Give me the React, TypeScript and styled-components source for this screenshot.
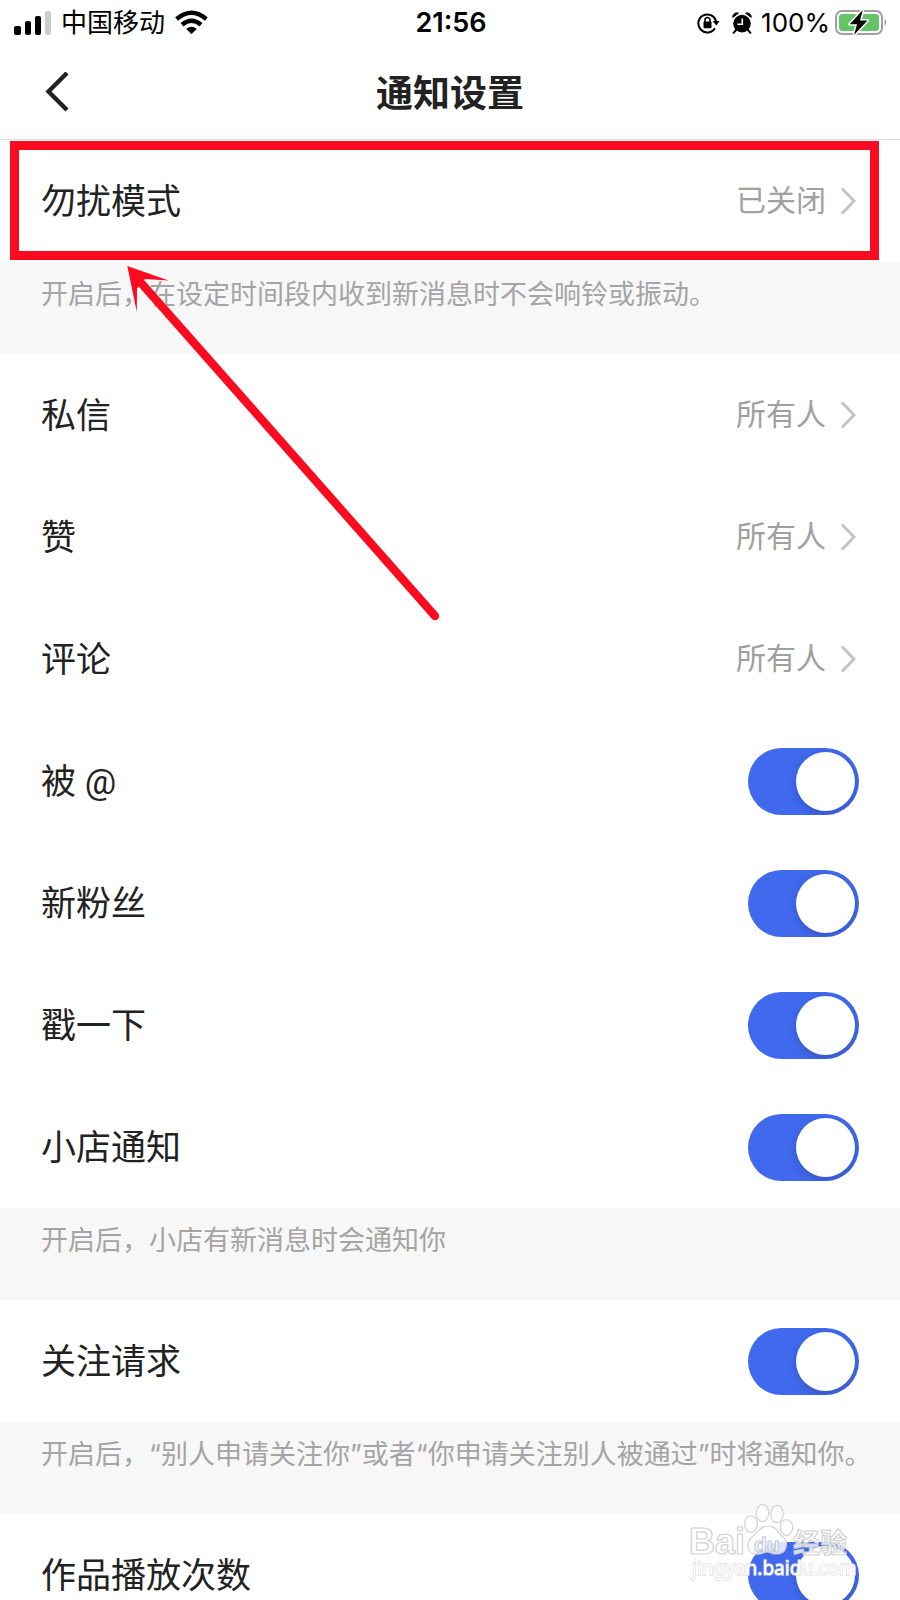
import React, { useState } from 'react';
import styled, { createGlobalStyle, css } from 'styled-components';

const GlobalStyle = createGlobalStyle`
  * { box-sizing: border-box; }
  body {
    margin: 0;
    background: #fff;
    color: #222;
    font-family: Inter, "Noto Sans CJK SC", sans-serif;
  }
`;

const Screen = styled.div`
  position: relative;
  display: flex;
  flex-direction: column;
  height: 100vh;
  overflow: hidden;
  background: #fff;
`;

const StatusBar = styled.div`
  display: grid;
  grid-template-columns: 1fr auto 1fr;
  align-items: center;
  flex: none;
  height: 45px;
  padding: 0 12px 0 14px;
  color: #000;
  font-size: 26px;
  line-height: 36px;
`;

const StatusGroup = styled.div<{ $end?: boolean }>`
  display: flex;
  align-items: center;
  justify-content: ${(p) => (p.$end ? 'flex-end' : 'flex-start')};
  gap: ${(p) => (p.$end ? 5 : 10)}px;
  svg { flex: none; }
`;

const Clock = styled.time`
  font-size: 27px;
  font-weight: 600;
`;

const StatusIcons = styled.span`
  display: flex;
  gap: 12px;
  margin-right: 4px;
`;

const NavBar = styled.header`
  display: grid;
  grid-template-columns: 1fr auto 1fr;
  align-items: center;
  flex: none;
  height: 95px;
  padding: 0 41px;
  border-bottom: 1px solid #dcdcdc;
`;

const BackButton = styled.button`
  display: flex;
  justify-self: start;
  padding: 0;
  border: 0;
  background: none;
  cursor: pointer;
`;

const Title = styled.h1`
  margin: 0;
  padding-top: 4px;
  font-size: 37px;
  line-height: 48px;
  font-weight: 600;
`;

const List = styled.main`
  flex: 1;
  min-height: 0;
  overflow-y: auto;
  scrollbar-width: none;
`;

const rowStyle = css`
  display: flex;
  align-items: center;
  justify-content: space-between;
  width: 100%;
  min-height: 122px;
  padding: 0 41px;
  background: #fff;
  color: #222;
  font-family: Roboto, "Noto Sans CJK SC", sans-serif;
  font-size: 35px;
  line-height: 48px;
  cursor: pointer;
`;

const LinkRow = styled.button`
  ${rowStyle}
  border: 0;
  text-align: left;
`;

const SwitchRow = styled.label`
  ${rowStyle}
`;

const RowLabel = styled.span`
  padding-top: 4px;
`;

const RowValue = styled.span`
  display: flex;
  align-items: center;
  gap: 14px;
  padding-right: 3px;
  color: #a0a0a0;
  font-size: 30px;
`;

const Switch = styled.input`
  appearance: none;
  display: flex;
  flex: none;
  width: 111px;
  height: 67px;
  margin: 0;
  padding: 4px;
  border-radius: 34px;
  background: #d8d8d8;
  overflow: hidden;
  cursor: pointer;

  &::before {
    content: "";
    width: 59px;
    height: 59px;
    border-radius: 50%;
    background: #fff;
    box-shadow: 0 3px 8px rgba(0, 0, 0, 0.2);
  }
  &:checked {
    justify-content: flex-end;
    background: #4069ee;
  }
`;

const Hint = styled.p`
  min-height: 92px;
  margin: 0;
  padding: 14px 0 0 41px;
  background: #f7f7f7;
  color: #a4a4a4;
  font-size: 27px;
  line-height: 38px;
  white-space: nowrap;
`;

const Highlighted = styled.div`
  position: relative;
`;

const HighlightFrame = styled.div`
  position: absolute;
  inset: 1px 21px 2px 10px;
  border: 9px solid #fc0a1f;
  pointer-events: none;
`;

const Arrow = styled.svg`
  position: absolute;
  top: 122px;
  left: 120px;
  z-index: 1;
  pointer-events: none;
`;

const Watermark = styled.svg`
  position: absolute;
  right: 42px;
  bottom: 14px;
  pointer-events: none;
`;

const SignalIcon = () => (
  <svg width="37" height="24" viewBox="0 0 37 24" aria-hidden="true">
    <rect x="0" y="15" width="7" height="9" rx="2" />
    <rect x="11" y="10" width="6" height="14" rx="2" />
    <rect x="21" y="5" width="6" height="19" rx="2" />
    <rect x="31" y="0" width="6" height="24" rx="2" fill="#ccc" />
  </svg>
);

const WifiIcon = () => (
  <svg width="33" height="25" viewBox="0 0 33 25" aria-hidden="true">
    <g fill="none" stroke="#000" strokeWidth="4.4">
      <path d="M1.6 9 Q16.5 -3.6 31.4 9" />
      <path d="M7 14.7 Q16.5 6.8 26 14.7" />
    </g>
    <path d="M11.2 19 Q16.5 14.6 21.8 19 L16.5 24 Z" />
  </svg>
);

const RotationLockIcon = () => (
  <svg width="23" height="22" viewBox="0 0 23 22" aria-hidden="true">
    <path d="M18 16.2A9 9 0 1 1 19 9" fill="none" stroke="#000" strokeWidth="2" />
    <path d="M15.5 9H22.5L19.4 13.5Z" />
    <rect x="6.5" y="9.6" width="8" height="6.6" rx="1" />
    <path d="M8 10V8a2.5 2.5 0 0 1 5 0v2" fill="none" stroke="#000" strokeWidth="1.6" />
  </svg>
);

const AlarmIcon = () => (
  <svg width="20" height="22" viewBox="0 0 20 22" aria-hidden="true">
    <circle cx="10" cy="11.6" r="8.8" />
    <path d="M.8 5.4A4 4 0 0 1 6.4 1.2ZM19.2 5.4A4 4 0 0 0 13.6 1.2Z" stroke="#000" />
    <path d="M4 18 1.6 20.8M16 18l2.4 2.8" stroke="#000" strokeWidth="2" strokeLinecap="round" />
    <path d="M10.3 6.4v5.8H5.4" fill="none" stroke="#fff" strokeWidth="1.6" />
  </svg>
);

const BatteryIcon = () => (
  <svg width="53" height="28" viewBox="0 0 53 28" aria-hidden="true">
    <rect x="1" y="2" width="46" height="23" rx="6" fill="#fff" stroke="#a0a0a3" strokeWidth="2" />
    <rect x="4" y="5" width="40" height="17" rx="3.5" fill="#65c466" />
    <path d="M49.5 9.5Q53 13.5 49.5 17.5Z" fill="#a0a0a3" />
    <path
      d="M27.8 1 14.6 15.2H22L19 26 32.5 11.5H25Z"
      stroke="#fff"
      strokeWidth="3"
      strokeLinejoin="round"
      paintOrder="stroke"
    />
  </svg>
);

const Chevron = () => (
  <svg width="16" height="28" viewBox="0 0 16 28" fill="none" aria-hidden="true">
    <path d="M2 1.5 14 14 2 26.5" stroke="#c4c4c4" strokeWidth="3" />
  </svg>
);

const BackIcon = () => (
  <svg width="28" height="40" viewBox="0 0 28 40" fill="none" aria-hidden="true">
    <path d="M26 1 7.5 19.5 26 38" stroke="#222" strokeWidth="4.4" />
  </svg>
);

const PointerArrow = () => (
  <Arrow width="325" height="365" viewBox="0 0 325 365" aria-hidden="true">
    <path d="M22 22 315 354" stroke="#fc0a1f" strokeWidth="8.4" strokeLinecap="round" />
    <path d="M7.3 4 48.5 18.5 25 17 17 26.5 16.8 50Z" fill="#fc0a1f" />
  </Arrow>
);

const BaiduWatermark = () => (
  <Watermark width="168" height="84" viewBox="0 0 168 84" aria-label="Baidu 经验 jingyan.baidu.com">
    <g
      fill="#fff"
      fillOpacity="0.8"
      stroke="#d2d2d2"
      strokeWidth="1.2"
      fontFamily='"Liberation Sans", "Noto Sans CJK SC", sans-serif'
    >
      <text x="-1" y="52" fontSize="36" fontWeight="700">Bai</text>
      <ellipse cx="61" cy="22" rx="6.4" ry="8.3" />
      <ellipse cx="72.5" cy="11" rx="6.2" ry="8.6" />
      <ellipse cx="87" cy="12" rx="6.2" ry="8.6" />
      <ellipse cx="96.5" cy="25.5" rx="6.2" ry="8" />
      <path d="M78 24C86 24 88 31 93 35C99 40 97 52 87 52C82 52 80 50 77 50C73 50 71 53 66 52C56 51 56 40 62 35C68 31 70 24 78 24Z" />
      <text x="64" y="50" fontSize="21" fontWeight="700" stroke="#c2c8dc">du</text>
      <text x="103" y="51" fontSize="27" fontWeight="700">经验</text>
    </g>
    <text
      x="2"
      y="73"
      fontSize="19"
      fill="#fff"
      stroke="#d8d8d8"
      strokeOpacity="0.9"
      strokeWidth="1.4"
      paintOrder="stroke"
      fontFamily='"Noto Sans", sans-serif'
    >
      jingyan.baidu.com
    </text>
  </Watermark>
);

function ValueItem({ label, value }: { label: string; value: string }) {
  return (
    <LinkRow type="button">
      <RowLabel>{label}</RowLabel>
      <RowValue>
        {value}
        <Chevron />
      </RowValue>
    </LinkRow>
  );
}

function SwitchItem({ label }: { label: string }) {
  const [on, setOn] = useState(true);
  return (
    <SwitchRow>
      <RowLabel>{label}</RowLabel>
      <Switch type="checkbox" role="switch" checked={on} onChange={(e) => setOn(e.target.checked)} />
    </SwitchRow>
  );
}

export default function App() {
  return (
    <Screen lang="zh-CN">
      <GlobalStyle />
      <StatusBar>
        <StatusGroup>
          <SignalIcon />
          <span>中国移动</span>
          <WifiIcon />
        </StatusGroup>
        <Clock>21:56</Clock>
        <StatusGroup $end>
          <StatusIcons>
            <RotationLockIcon />
            <AlarmIcon />
          </StatusIcons>
          <span>100%</span>
          <BatteryIcon />
        </StatusGroup>
      </StatusBar>
      <NavBar>
        <BackButton type="button" aria-label="返回">
          <BackIcon />
        </BackButton>
        <Title>通知设置</Title>
      </NavBar>
      <List>
        <Highlighted>
          <ValueItem label="勿扰模式" value="已关闭" />
          <HighlightFrame />
          <PointerArrow />
        </Highlighted>
        <Hint>开启后，在设定时间段内收到新消息时不会响铃或振动。</Hint>
        <ValueItem label="私信" value="所有人" />
        <ValueItem label="赞" value="所有人" />
        <ValueItem label="评论" value="所有人" />
        <SwitchItem label="被 @" />
        <SwitchItem label="新粉丝" />
        <SwitchItem label="戳一下" />
        <SwitchItem label="小店通知" />
        <Hint>开启后，小店有新消息时会通知你</Hint>
        <SwitchItem label="关注请求" />
        <Hint>开启后，“别人申请关注你”或者“你申请关注别人被通过”时将通知你。</Hint>
        <SwitchItem label="作品播放次数" />
      </List>
      <BaiduWatermark />
    </Screen>
  );
}
